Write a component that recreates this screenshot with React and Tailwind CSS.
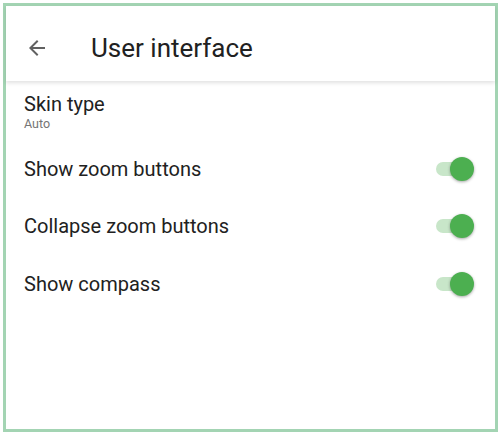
import React from 'react';

function Toggle() {
  return (
    <div className="relative w-[36px] h-[24px] flex items-center">
      <div className="w-[34px] h-[14px] rounded-full bg-[#c8e6c9]" />
      <div className="absolute right-[-2px] top-0 w-[24px] h-[24px] rounded-full bg-[#4caf50] shadow-[0_1px_3px_rgba(0,0,0,0.35)]" />
    </div>
  );
}

const rows = ['Show zoom buttons', 'Collapse zoom buttons', 'Show compass'];

export default function App() {
  return (
    <div className="w-[501px] h-[435px] bg-white p-[3px]" style={{ fontFamily: 'Roboto, "Noto Sans", sans-serif' }}>
      <div className="h-full border-[3px] border-[#a3d4b3] bg-white flex flex-col">
        {/* Toolbar */}
        <div className="h-[75px] pt-[8px] flex items-center shadow-[0_2px_4px_rgba(0,0,0,0.12)] relative z-10">
          <div className="w-[80px] pl-[19px] flex items-center">
            <svg width="24" height="24" viewBox="0 0 24 24" fill="#616161">
              <path d="M20 11H7.83l5.59-5.59L12 4l-8 8 8 8 1.41-1.41L7.83 13H20v-2z" />
            </svg>
          </div>
          <div className="pl-[5px] text-[26px] text-[#212121] leading-none">User interface</div>
        </div>

        <div className="pl-[18px] pr-[23px]">
          <div className="pt-[11px] pb-[8px]">
            <div className="text-[20px] text-[#212121] leading-[24px]">Skin type</div>
            <div className="text-[12.5px] text-[#757575] leading-[16px]">Auto</div>
          </div>
          {rows.map((r) => (
            <div key={r} className="h-[57.5px] flex items-center justify-between">
              <span className="text-[20px] text-[#212121]">{r}</span>
              <Toggle />
            </div>
          ))}
        </div>
      </div>
    </div>
  );
}
